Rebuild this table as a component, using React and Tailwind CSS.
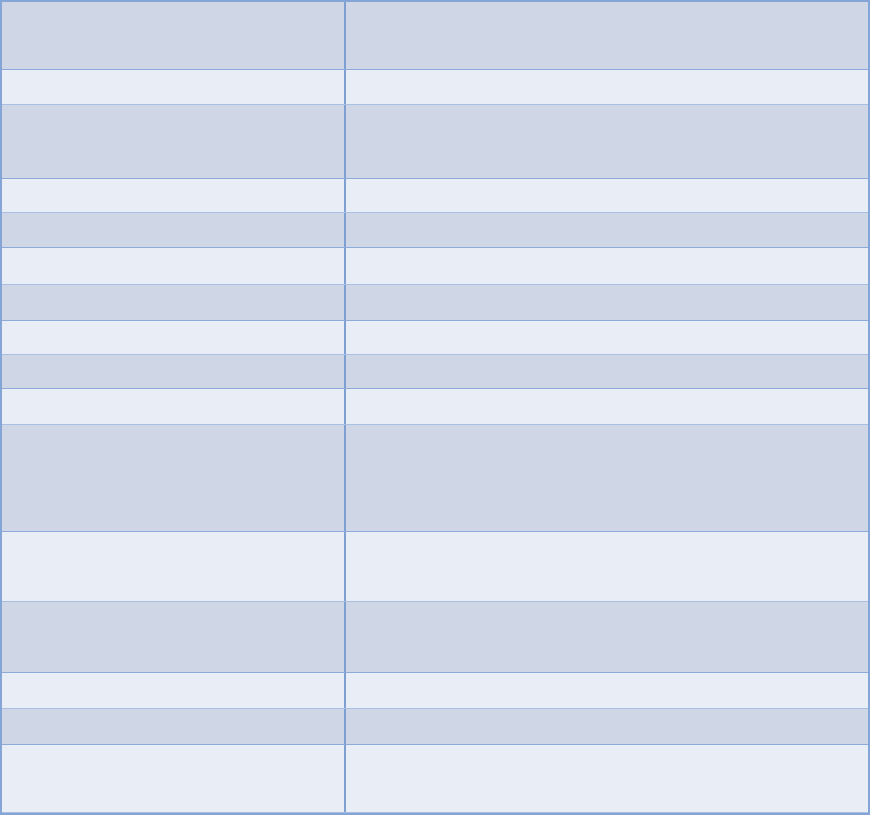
const rows = [
  'h-[68px]', 'h-[35px]', 'h-[74px]', 'h-[34px]', 'h-[35px]', 'h-[37px]', 'h-[36px]', 'h-[34px]',
  'h-[34px]', 'h-[36px]', 'h-[107px]', 'h-[70px]', 'h-[71px]', 'h-[36px]', 'h-[36px]', 'h-[68px]',
];

export default function App() {
  return (
    <div className="w-[870px] h-[815px] bg-white">
      <div className="border-2 border-[#84a5d6] flex flex-col">
        {rows.map((h, i) => {
          const dark = i % 2 === 0;
          return (
            <div
              key={i}
              className={`${h} flex ${dark ? 'bg-[#cfd7e6] border-b border-[#8eaadb]' : 'bg-[#e8edf6] border-b border-[#a9bfe2]'}`}
            >
              <div className="w-[344px] border-r-2 border-[#7e9fd2]"></div>
              <div className="flex-1"></div>
            </div>
          );
        })}
      </div>
    </div>
  );
}
